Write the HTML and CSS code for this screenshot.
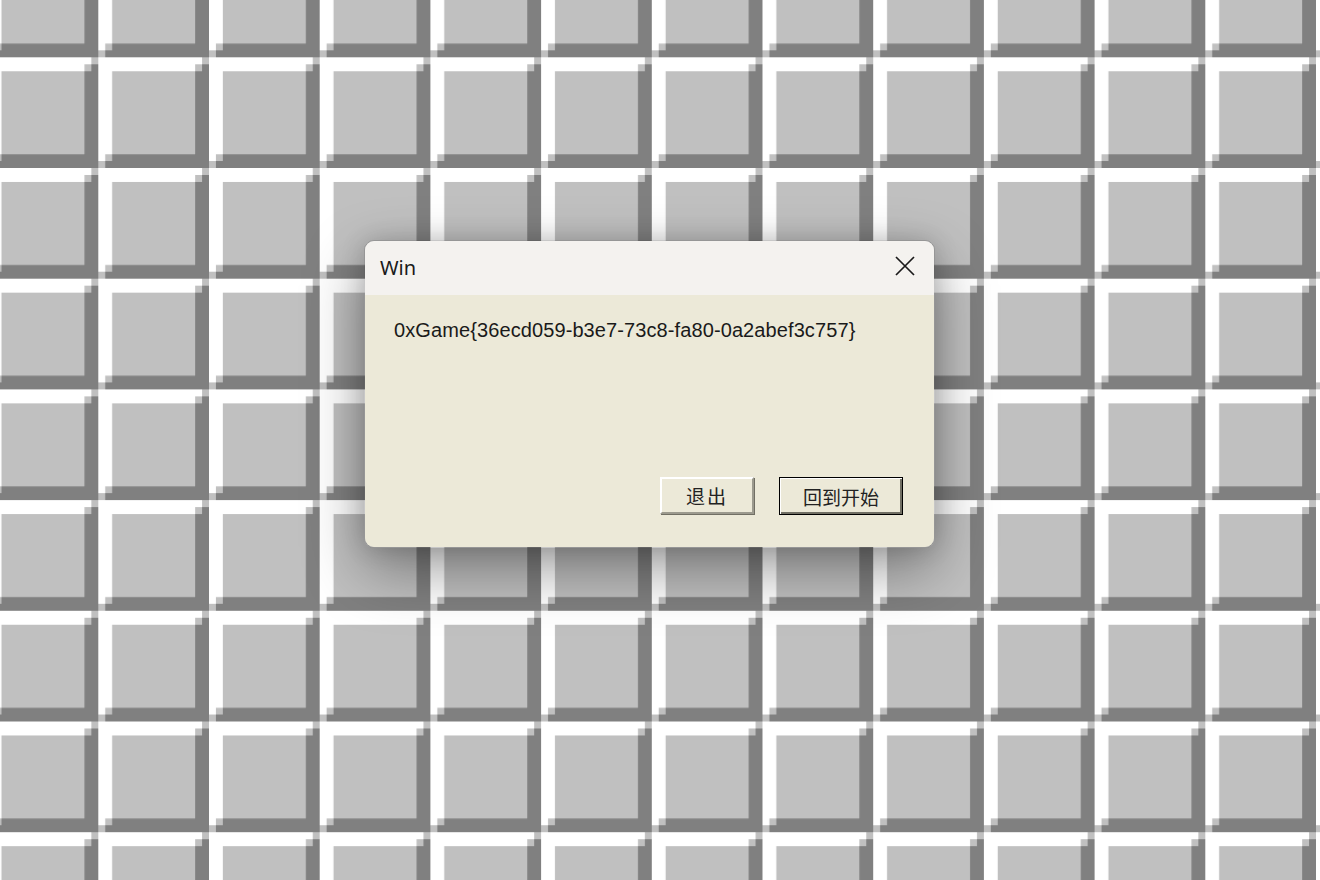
FILE: index.html
```html
<!DOCTYPE html>
<html>
<head>
<meta charset="utf-8">
<link rel="stylesheet" href="styles.css">
</head>
<body>
<svg class="board" width="1320" height="880" viewBox="0 0 1320 880">
  <defs>
    <pattern id="tile" patternUnits="userSpaceOnUse" width="16" height="16" patternTransform="translate(-12.4,-53.4) scale(6.91875)">
      <rect x="0" y="0" width="16" height="16" fill="#c0c0c0"/>
      <path d="M0 0 H15 V1 H14 V2 H2 V14 H1 V15 H0 Z" fill="#ffffff"/>
      <path d="M16 1 V16 H1 V15 H2 V14 H14 V2 H15 V1 Z" fill="#808080"/>
    </pattern>
  </defs>
  <rect x="0" y="0" width="1320" height="880" fill="url(#tile)"/>
</svg>
<div class="dialog">
  <div class="titlebar">
    <span class="title">Win</span>
    <span class="close"><svg width="22" height="22" viewBox="0 0 22 22"><path d="M2 2 L20 20 M20 2 L2 20" stroke="#1a1a1a" stroke-width="1.7" fill="none"/></svg></span>
  </div>
  <div class="content">
    <p class="message">0xGame{36ecd059-b3e7-73c8-fa80-0a2abef3c757}</p>
    <div class="actions">
      <button class="btn">退出</button>
      <button class="btn default">回到开始</button>
    </div>
  </div>
</div>
</body>
</html>
```
FILE: styles.css
```css
html, body {
  margin: 0;
  padding: 0;
  width: 1320px;
  height: 880px;
  overflow: hidden;
  background: #c0c0c0;
}
.board {
  display: block;
}
.dialog {
  position: absolute;
  left: 364px;
  top: 240px;
  width: 571px;
  height: 308px;
  border-radius: 10px;
  overflow: hidden;
  border: 1px solid rgba(0,0,0,0.22);
  box-sizing: border-box;
  box-shadow: 0 22px 60px rgba(0,0,0,0.38), 0 0 24px rgba(0,0,0,0.16);
  display: flex;
  flex-direction: column;
  font-family: "Liberation Sans", Arial, sans-serif;
}
.titlebar {
  height: 54px;
  background: #f4f2ef;
  display: flex;
  align-items: center;
  justify-content: space-between;
  padding: 0 18px 0 15px;
}
.title {
  font-family: "Noto Sans", "Open Sans", sans-serif;
  font-size: 20px;
  color: #1a1a1a;
  margin-top: -2px;
}
.close {
  display: flex;
  margin-top: -4px;
}
.content {
  flex: 1;
  background: #ece9d8;
  display: flex;
  flex-direction: column;
  padding: 23px 31px 32px 29px;
}
.message {
  margin: 0;
  font-size: 20px;
  line-height: 24px;
  color: #1a1a1a;
  letter-spacing: 0.1px;
  flex: 1;
}
.actions {
  display: flex;
  justify-content: flex-end;
  gap: 25px;
}
.btn {
  box-sizing: border-box;
  height: 37px;
  width: 94px;
  background: #ece9d8;
  font-family: "Noto Sans CJK SC", sans-serif;
  font-size: 19px;
  color: #222;
  padding: 0;
  border: 2px solid;
  border-color: #ffffff #9c9a8e #9c9a8e #ffffff;
  box-shadow: 1px 1px 0 #716f64;
  letter-spacing: 2px;
}
.btn.default {
  width: 124px;
  height: 38px;
  border: 1px solid #000;
  box-shadow: inset 1px 1px 0 #ffffff, inset -2px -2px 0 #716f64;
  letter-spacing: 0;
}
```
